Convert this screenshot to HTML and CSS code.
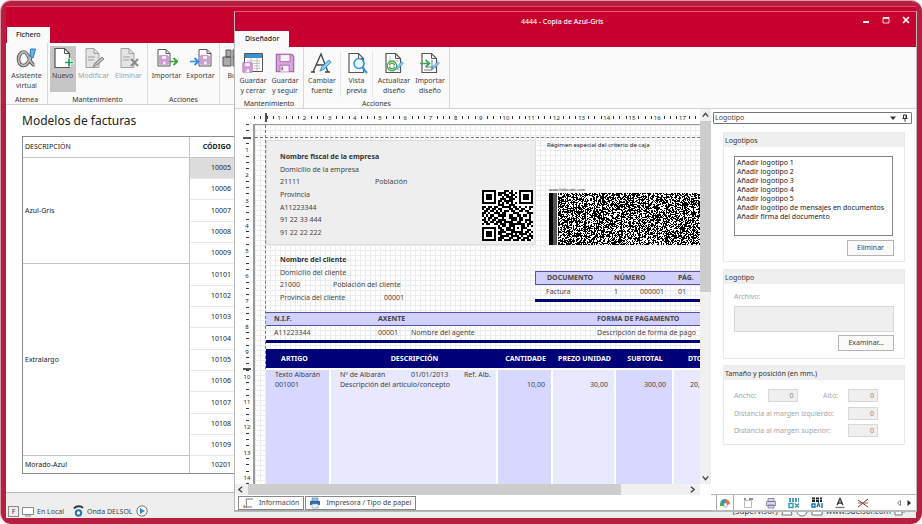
FILE: index.html
```html
<!DOCTYPE html>
<html lang="es">
<head>
<meta charset="utf-8">
<title>4444 - Copia de Azul-Gris</title>
<link rel="stylesheet" href="styles.css">
</head>
<body>
<svg class="defs" aria-hidden="true">
  <symbol id="i-page" viewBox="0 0 22 22"><path d="M3 1.5h9.500l5 5v14h-14.500z" fill="#fff" stroke="#555" stroke-width="1.200"/><path d="M12.500 1.500v5h5" fill="none" stroke="#555"/></symbol>
  <symbol id="i-floppy" viewBox="0 0 22 22"><path d="M1.500 1.500h17l2 2v17h-19z" fill="#d9a3dc" stroke="#a56bab" stroke-width="1.400"/><path d="M5.500 1.500h11v8h-11z" fill="#f8f2f8" stroke="#a56bab"/><path d="M5.500 20.500v-7h10v7" fill="#f8f2f8" stroke="#a56bab"/><path d="M8 15v4" stroke="#a56bab" stroke-width="2"/></symbol>
  <symbol id="i-pen" viewBox="0 0 14 14"><path d="M1 13l2-4.500 7.500-7.500 2.500 2.500-7.500 7.500z" fill="#8ccbf0" stroke="#2b8acb"/></symbol>
</svg>
<div class="frame">
  <main class="app">
    <header class="titlebar"><button class="tab" type="button">Fichero</button></header>
    <nav class="ribbon" aria-label="Fichero">
      <section class="group group-atenea">
        <div class="tools">
          <button class="tool" type="button"><svg viewBox="0 0 22 22"><path d="M17 2.500c-1 6-4.500 16-9.500 16-3 0-5-3-5-6.500s2.200-7 5.500-7c5 0 5.500 13 10.500 13" fill="none" stroke="#555" stroke-width="3.600"/><path d="M16.500 4c-1 5-4.500 14.500-9 14.500-3 0-5-3-5-6.500s2.200-7 5.500-7c5 0 5.500 13 10.500 13" fill="none" stroke="#bdbdbd" stroke-width="1.800"/><path d="M14.500 2h5l-2.500 9-3-2z" fill="#64b5ec" stroke="#2b7fc0"/></svg>Asistente<br>virtual</button>
        </div>
        <h2>Atenea</h2>
      </section>
      <section class="group group-mant">
        <div class="tools">
          <button class="tool active" type="button"><svg viewBox="0 0 22 22"><use href="#i-page"/><path d="M17 11v9M12.500 15.500h9" stroke="#fff" stroke-width="3.600"/><path d="M17 11.500v8M13 15.500h8" stroke="#13a35b" stroke-width="1.700"/></svg>Nuevo</button>
          <button class="tool wide off" type="button"><svg viewBox="0 0 22 22"><path d="M3 1.500h8l5 5v14h-13z" fill="#e4e4e4" stroke="#a0a0a0"/><path d="M11 1.500v5h5M5 10h7M5 13h6" fill="none" stroke="#a0a0a0"/><path d="M10 20l2-4 7-6 2 2-7 6z" fill="#bbb" stroke="#888"/></svg>Modificar</button>
          <button class="tool wide off" type="button"><svg viewBox="0 0 22 22"><path d="M3 1.500h8l5 5v14h-13z" fill="#e4e4e4" stroke="#a0a0a0"/><path d="M11 1.500v5h5M5 10h7M5 13h6" fill="none" stroke="#a0a0a0"/><path d="M13 12l7 7M20 12l-7 7" stroke="#888" stroke-width="2"/></svg>Eliminar</button>
        </div>
        <h2>Mantenimiento</h2>
      </section>
      <section class="group group-acc">
        <div class="tools">
          <button class="tool wide" type="button"><svg viewBox="0 0 22 22"><path d="M2 2.500h8l4 4v12.500h-12z" fill="#fff" stroke="#555"/><path d="M10 2.500v4h4" fill="none" stroke="#555"/><use href="#i-floppy" x="3" y="8" width="10" height="10"/><path d="M13 14.500h8M17.500 11l4 3.500-4 3.500" fill="none" stroke="#3fa33c" stroke-width="1.700"/></svg>Importar</button>
          <button class="tool wide" type="button"><svg viewBox="0 0 22 22"><path d="M9 2.500h8l4 4v12.500h-12z" fill="#fff" stroke="#555"/><path d="M17 2.500v4h4" fill="none" stroke="#555"/><use href="#i-floppy" x="10" y="8" width="10" height="10"/><path d="M0 14.500h8M4.500 11l4 3.500-4 3.500" fill="none" stroke="#2492d6" stroke-width="1.700"/></svg>Exportar</button>
        </div>
        <h2>Acciones</h2>
      </section>
      <section class="group group-find">
        <div class="tools">
          <button class="tool" type="button"><svg viewBox="0 0 22 22"><path d="M5 3h5v7h-5zM12 3h5v7h-5zM2 10h8v9h-8zM12 10h8v9h-8z" fill="#aaa" stroke="#555"/></svg>Bu</button>
        </div>
      </section>
    </nav>
    <section class="models">
      <h1>Modelos de facturas</h1>
      <table class="list">
        <thead><tr><th class="desc">DESCRIPCIÓN</th><th class="code">CÓDIGO</th><th></th></tr></thead>
        <tbody>
          <tr><td class="desc" rowspan="5">Azul-Gris</td><td class="code selected">10005</td><td></td></tr>
          <tr><td class="code">10006</td><td></td></tr>
          <tr><td class="code">10007</td><td></td></tr>
          <tr><td class="code">10008</td><td></td></tr>
          <tr><td class="code">10009</td><td></td></tr>
          <tr><td class="desc" rowspan="9">Extralargo</td><td class="code">10101</td><td></td></tr>
          <tr><td class="code">10102</td><td></td></tr>
          <tr><td class="code">10103</td><td></td></tr>
          <tr><td class="code">10104</td><td></td></tr>
          <tr><td class="code">10105</td><td></td></tr>
          <tr><td class="code">10106</td><td></td></tr>
          <tr><td class="code">10107</td><td></td></tr>
          <tr><td class="code">10108</td><td></td></tr>
          <tr><td class="code">10109</td><td></td></tr>
          <tr class="last"><td class="desc">Morado-Azul</td><td class="code">10201</td><td></td></tr>
        </tbody>
      </table>
    </section>
    <footer class="status">
      <span class="key">F</span>
      <svg class="monitor" viewBox="0 0 12 11"><path d="M.5 1.500h11v7h-11z" fill="#fff" stroke="#888"/><path d="M3 10h6" stroke="#888"/></svg>
      <span>En Local</span>
      <svg class="phone" viewBox="0 0 11 12"><path d="M1 3.500c2-3 7-3 9-.5" fill="none" stroke="#333" stroke-width="2"/><circle cx="5.500" cy="8" r="2.700" fill="#fff" stroke="#1d78b8" stroke-width="2"/></svg>
      <span>Onda DELSOL</span>
      <svg class="play" viewBox="0 0 12 12"><circle cx="6" cy="6" r="5.200" fill="#fff" stroke="#555" stroke-width=".8"/><path d="M4 3l5 3-5 3z" fill="#2d87cf"/></svg>
      <span class="right"><span>[Supervisor]</span>
      <svg class="monitor" viewBox="0 0 12 11"><path d="M1 10l2-8h6l2 8z" fill="#fff" stroke="#777"/></svg>
      <svg class="play" viewBox="0 0 12 12"><circle cx="6" cy="6" r="5" fill="#fff" stroke="#777"/></svg>
      <svg class="monitor" viewBox="0 0 12 11"><path d="M1 1h10v9h-10z" fill="#fff" stroke="#777"/></svg>
      <a href="#web">www.sdelsol.com</a>
      <svg class="monitor" viewBox="0 0 12 11"><path d="M1 4h7v6h-7zM4 4v-3h7v6h-3" fill="#fff" stroke="#777"/></svg></span>
    </footer>
  </main>

  <section class="designer" aria-label="4444 - Copia de Azul-Gris">
    <header class="titlebar">
      <button class="tab" type="button">Diseñador</button>
      <strong class="title">4444 - Copia de Azul-Gris</strong>
      <div class="controls">
        <button type="button" aria-label="Minimizar"><svg viewBox="0 0 8 8"><path d="M1 6h6" stroke="#fff" stroke-width="2"/></svg></button>
        <button type="button" aria-label="Maximizar"><svg viewBox="0 0 8 8"><path d="M1 1.500h6v5.500h-6z" fill="none" stroke="#fff" stroke-width=".8"/><path d="M1 2h6" stroke="#fff" stroke-width="1.600"/></svg></button>
        <button type="button" aria-label="Cerrar"><svg viewBox="0 0 8 8"><path d="M1 1l6 6M7 1l-6 6" stroke="#fff" stroke-width="1.700"/></svg></button>
      </div>
    </header>
    <nav class="ribbon" aria-label="Diseñador">
      <section class="group group-save">
        <div class="tools">
          <button class="tool" type="button"><svg viewBox="0 0 22 22"><path d="M2.500 1.500h18v18h-18z" fill="#fff" stroke="#555"/><path d="M3 2h17v4h-17z" fill="#3c92d0"/><path d="M5 9h13M5 11.500h13M12 14h6M12 16.500h6M9 6v13M15 6v13" stroke="#aaa" stroke-width=".7"/><use href="#i-floppy" x="0" y="10" width="11" height="11"/></svg>Guardar<br>y cerrar</button>
          <button class="tool" type="button"><svg viewBox="0 0 22 22"><use href="#i-floppy" x="1" y="1" width="20" height="20"/></svg>Guardar<br>y seguir</button>
        </div>
        <h2>Mantenimiento</h2>
      </section>
      <section class="group group-edit">
        <div class="tools">
          <button class="tool cambiar" type="button"><svg viewBox="0 0 22 22"><path d="M2 20l8-18 7 18M5.500 13h8.500M0 20h4M14 20h5" fill="none" stroke="#444" stroke-width="1.300"/><use href="#i-pen" x="8" y="7" width="13" height="13"/></svg>Cambiar<br>fuente</button>
          <button class="tool vista" type="button"><svg viewBox="0 0 22 22"><use href="#i-page"/><circle cx="13" cy="11.500" r="5" fill="#e8f5fd" stroke="#3597d6" stroke-width="1.500"/><path d="M16.500 15.500l4.500 5.500" stroke="#3597d6" stroke-width="2"/></svg>Vista<br>previa</button>
          <button class="tool actualizar" type="button"><svg viewBox="0 0 22 22"><use href="#i-page"/><path d="M7 4v14M5 9h11M5 17h11M11 8v12" stroke="#999" stroke-width=".6"/><circle cx="9" cy="14" r="4.800" fill="none" stroke="#43a846" stroke-width="1.300"/><path d="M6 13c2-3 4-2 6 0M12 15c-2 3-4 2-6 0" fill="none" stroke="#43a846" stroke-width="1.100"/><use href="#i-pen" x="12" y="9" width="9" height="9"/></svg>Actualizar<br>diseño</button>
          <button class="tool importar" type="button"><svg viewBox="0 0 22 22"><use href="#i-page"/><path d="M13 8v10M7 15h10M5 18h8" stroke="#555" stroke-width=".8"/><path d="M1 11.500h9M6.500 8l4 3.500-4 3.500" fill="none" stroke="#3ba552" stroke-width="1.700"/><use href="#i-pen" x="12" y="9" width="9" height="9"/></svg>Importar<br>diseño</button>
        </div>
        <h2>Acciones</h2>
      </section>
    </nav>
    <div class="work">
      <div class="canvas">
        <svg class="ruler-h" id="ruler-h" aria-hidden="true"></svg>
        <svg class="ruler-v" id="ruler-v" aria-hidden="true"></svg>
        <div class="page">
          <div class="top">
            <address class="company">
              <b>Nombre fiscal de la empresa</b>
              <span>Domicilio de la empresa</span>
              <span class="cols"><span>21111</span><span>Población</span></span>
              <span>Provincia</span>
              <span>A11223344</span>
              <span>91 22 33 444</span>
              <span>91 22 22 222</span>
              <svg class="qr" id="qr" viewBox="0 0 25 25" role="img" aria-label="QR"></svg>
            </address>
            <div class="regime">
              <p>Régimen especial del criterio de caja</p>
              <div class="barcode-box"><small>www.hitbcode.com</small>
              <svg class="barcode" id="barcode" aria-hidden="true"></svg></div>
            </div>
          </div>
          <div class="second">
            <address class="client">
              <b>Nombre del cliente</b>
              <span>Domicilio del cliente</span>
              <span class="cols c1"><span>21000</span><span>Población del cliente</span></span>
              <span class="cols c2"><span>Provincia del cliente</span><span>00001</span></span>
            </address>
            <table class="band doc">
              <colgroup><col class="d1"><col class="d2"><col class="d3"><col class="d4"></colgroup>
              <thead><tr><th>DOCUMENTO</th><th colspan="2">NÚMERO</th><th>PÁG.</th></tr></thead>
              <tbody><tr><td>Factura</td><td>1</td><td>000001</td><td>01</td></tr></tbody>
            </table>
          </div>
          <table class="band nif">
            <colgroup><col class="n1"><col class="n2"><col class="n3"><col class="n4"></colgroup>
            <thead><tr><th>N.I.F.</th><th colspan="2">AXENTE</th><th>FORMA DE PAGAMENTO</th></tr></thead>
            <tbody><tr><td>A11223344</td><td>00001</td><td>Nombre del agente</td><td>Descripción de forma de pago</td></tr></tbody>
          </table>
          <table class="items">
            <colgroup><col class="w1"><col class="w2"><col class="w3"><col class="w4"><col class="w5"><col class="w6"></colgroup>
            <thead><tr><th>ARTIGO</th><th>DESCRIPCIÓN</th><th>CANTIDADE</th><th>PREZO UNIDAD</th><th>SUBTOTAL</th><th>DTO.</th></tr></thead>
            <tbody><tr>
              <td>Texto Albarán<br>001001</td>
              <td><span class="note"><span>Nº de Albarán</span><span>01/01/2013</span><span>Ref. Alb.</span></span>Descripción del artículo/concepto</td>
              <td class="n"><br>10,00</td><td class="n"><br>30,00</td><td class="n"><br>300,00</td><td class="n"><br>20,00</td>
            </tr></tbody>
          </table>
        </div>
        <div class="scroll-v"><svg viewBox="0 0 10 10"><path d="M2.500 6.500l2.500-3 2.500 3" fill="none" stroke="#444" stroke-width="1.300"/></svg><div class="thumb"></div><div class="track"></div><svg viewBox="0 0 10 10"><path d="M2.500 3.500l2.500 3 2.500-3" fill="none" stroke="#444" stroke-width="1.300"/></svg></div>
        <div class="scroll-h"><svg viewBox="0 0 10 10"><path d="M6.500 2.500l-3 2.500 3 2.500" fill="none" stroke="#444" stroke-width="1.300"/></svg><div class="thumb"></div><div class="track"></div><svg viewBox="0 0 10 10"><path d="M3.500 2.500l3 2.500-3 2.500" fill="none" stroke="#444" stroke-width="1.300"/></svg></div>
        <div class="sheets">
          <button type="button"><svg viewBox="0 0 12 12"><path d="M4 2h7M4.500 2c-1 2 1 5-.5 8h6M5 10c-2 1-4-1-2-2" fill="none" stroke="#777"/><path d="M1 9l2 2" stroke="#e5a33c" stroke-width="1.600"/></svg>Información</button>
          <button type="button"><svg viewBox="0 0 12 12"><path d="M3 1h6v3h-6z" fill="#9cc3ee" stroke="#4d79b5" stroke-width=".6"/><path d="M1 4h10v4h-10z" fill="#3768ad"/><path d="M3 7h6v4h-6z" fill="#eef5ff" stroke="#6b8dbd" stroke-width=".6"/></svg>Impresora / Tipo de papel</button>
        </div>
      </div>
      <aside class="props">
        <div class="picker"><label for="el">Logotipo</label><button id="el" type="button" aria-label="Lista"><svg viewBox="0 0 8 8"><path d="M1 2.500h6l-3 3.500z" fill="#333"/></svg></button><button type="button" aria-label="Fijar"><svg viewBox="0 0 8 8"><path d="M2.500 1h3v3.500h-3zM1.500 4.500h5M4 4.500v3" fill="none" stroke="#333"/><path d="M5 1v3.500" stroke="#333"/></svg></button></div>
        <fieldset class="box logos">
          <legend>Logotipos</legend>
          <select size="7" aria-label="Logotipos">
            <option>Añadir logotipo 1</option><option>Añadir logotipo 2</option><option>Añadir logotipo 3</option><option>Añadir logotipo 4</option><option>Añadir logotipo 5</option><option>Añadir logotipo de mensajes en documentos</option><option>Añadir firma del documento</option>
          </select>
          <button class="btn" type="button">Eliminar</button>
        </fieldset>
        <fieldset class="box file">
          <legend>Logotipo</legend>
          <label for="archivo">Archivo:</label>
          <textarea id="archivo" disabled></textarea>
          <button class="btn" type="button">Examinar...</button>
        </fieldset>
        <fieldset class="box size">
          <legend>Tamaño y posición (en mm.)</legend>
          <div class="row"><label for="ancho">Ancho:</label><input id="ancho" value="0" disabled><label class="push" for="alto">Alto:</label><input id="alto" value="0" disabled></div>
          <div class="row"><label for="izq">Distancia al margen izquierdo:</label><input id="izq" value="0" disabled></div>
          <div class="row"><label for="sup">Distancia al margen superior:</label><input id="sup" value="0" disabled></div>
        </fieldset>
        <div class="toolsheets">
          <button class="on" type="button" aria-label="Colores"><svg viewBox="0 0 12 12"><path d="M6 2a5 5 0 0 0-5 5v2h4z" fill="#4caf50"/><path d="M6 2a5 5 0 0 1 5 5l-5 2z" fill="#e8743b"/><path d="M2 4l4-2 1 4-3 1z" fill="#3d8bd4"/><path d="M5 6h3v4h-3z" fill="#fff" stroke="#777" stroke-width=".5"/></svg></button>
          <button type="button" aria-label="Texto"><svg viewBox="0 0 12 12"><path d="M2.500 3.500h7v7h-7z" fill="#fff" stroke="#bbb"/><path d="M7 2h4M2 2h2" stroke="#668" stroke-width="1.300"/></svg></button>
          <button type="button" aria-label="Impresora"><svg viewBox="0 0 12 12"><path d="M3 1.500h6v3h-6zM1.500 4.500h9v4h-9zM3 8h6v3h-6z" fill="#dcd9f3" stroke="#77719c" stroke-width=".8"/></svg></button>
          <button type="button" aria-label="Código"><svg viewBox="0 0 12 12"><path d="M1 2h10M1 4h10" stroke="#2377bd" stroke-width="1.400" stroke-dasharray="2 1"/><path d="M1 6.500h4v4h-4zM7 6.500l4 4M11 6.500l-4 4" fill="none" stroke="#2c9bb0" stroke-width="1.400"/></svg></button>
          <button type="button" aria-label="Código QR"><svg viewBox="0 0 12 12"><path d="M1 1.500h10M1 4h10" stroke="#222" stroke-width="2" stroke-dasharray="3 1"/><path d="M1 7h3v3h-3zM6 10l1.500-4 1.500 4M11 6v5" fill="none" stroke="#1673b5" stroke-width="1.400"/></svg></button>
          <button type="button" aria-label="Fuente"><svg viewBox="0 0 12 12"><path d="M3 8l3-6.500 3 6.500M4 6h4" fill="none" stroke="#333" stroke-width="1.300"/><path d="M1.500 10.500h9" stroke="#777" stroke-width="1.400"/></svg></button>
          <button type="button" aria-label="Líneas"><svg viewBox="0 0 12 12"><path d="M1 3l10 7M11 2l-10 8" stroke="#333" stroke-width=".9"/><path d="M1 6h10" stroke="#d2453c"/></svg></button>
          <span class="arrows"><button type="button" aria-label="Anterior"><svg viewBox="0 0 8 8"><path d="M5.500 1.500v5l-3-2.500z" fill="none" stroke="#666" stroke-width=".8"/></svg></button><button type="button" aria-label="Siguiente"><svg viewBox="0 0 8 8"><path d="M2.500 1v6l3.500-3z" fill="#222"/></svg></button></span>
        </div>
      </aside>
    </div>
  </section>
</div>
<script src="script.js"></script>
</body>
</html>
```
FILE: styles.css
```css
* { box-sizing: border-box; }
html, body { height: 100%; margin: 0; }
body { font: 7px/10px "Noto Sans", "Open Sans", sans-serif; color: #444; background: #fff; overflow: hidden; }
button, input, select, textarea { font: inherit; color: inherit; margin: 0; padding: 0; border: 0; background: none; border-radius: 0; }
h1, h2, p { margin: 0; font-weight: 400; }
address { font-style: normal; }
svg { display: block; flex: none; }
.defs { position: absolute; width: 0; height: 0; }

.frame { position: relative; height: 100vh; padding: 6px; background: #b71f40; border: 1px solid #d99aa8; border-width: 1px 0 0 1px; border-radius: 11px; display: flex; }
.app { flex: 1; min-width: 0; display: flex; flex-direction: column; background: #fff; border-top: 1px solid #d2506b; margin: -1px 0 0 -1px; overflow: hidden; }

.titlebar { display: flex; align-items: flex-end; height: 36px; flex: none; background: #c8002d; padding-left: 1px; }
.tab { height: 16px; padding: 0 9px; background: #fafafa; color: #222; font-weight: 500; }
.ribbon { display: flex; height: 62px; flex: none; background: #fafafa; border-bottom: 1px solid #d4d4d4; }
.group { display: flex; flex-direction: column; justify-content: space-between; padding-top: 3px; border-right: 1px solid #d8d8d8; flex: none; }
.group h2 { font-size: 7px; line-height: 9px; text-align: center; color: #333; }
.tools { display: flex; justify-content: center; }
.tool { display: flex; flex-direction: column; align-items: center; width: 33px; height: 46px; flex: none; line-height: 10px; white-space: nowrap; text-align: center; }
.tool svg { width: 22px; height: 22px; margin: 1px 0 2px; }
.tool.active { width: 26px; background: #c6c6c6; }
.tool.wide { width: 34px; }
.tool.off { color: #a3a3a3; }
.group-atenea { width: 42px; }
.group-mant { width: 100px; }
.group-mant .tools { gap: 1px; }
.group-acc { width: 72px; }
.group-find { width: 24px; border: 0; }

.models { flex: 1; min-height: 0; padding: 7px 16px 0; overflow: hidden; }
h1 { font-size: 12px; line-height: 18px; color: #222; margin-bottom: 6px; }
.list { width: 100%; table-layout: fixed; border-collapse: separate; border-spacing: 0; border: 1px solid #8a8a8a; color: #222; }
.list th, .list td { height: 21px; padding: 0 4px 0 2px; text-align: left; font-weight: 400; border-bottom: 1px solid #e8e8e8; }
.list thead th { border-bottom-color: #c4c4c4; }
.list .desc { width: 167px; border-right: 1px solid #c4c4c4; border-bottom-color: #c4c4c4; }
.list .code { width: 45px; text-align: right; }
.list th.code { font-weight: 700; }
.list .selected { background: #dcdcdc; }
.list tr:nth-child(3n) td.code { height: 22px; }
.list tbody tr.last td, .list tbody tr.last td.code { height: 17px; border-bottom: 0; }

.status { display: flex; align-items: flex-end; gap: 3px; height: 26px; flex: none; padding: 0 2px 1px; background: #eee; border-top: 1px solid #b9b9b9; line-height: 11px; }
.key { width: 11px; text-align: center; border: 1px solid #888; line-height: 9px; }
.monitor { width: 12px; height: 11px; }
.phone { width: 11px; height: 12px; margin-left: 6px; }
.play { width: 12px; height: 12px; }
.right { display: flex; gap: 3px; margin-left: auto; padding-right: 8px; font-size: 8px; }
.right a { color: inherit; text-decoration: none; }

.designer { position: absolute; inset: 10px 5px 12px 233px; display: flex; flex-direction: column; background: #fff; border: 1px solid #b9b9b9; border-top-color: #de5f7b; }
.designer .titlebar { height: 35px; padding-left: 0; }
.designer .tab { padding: 0 10px; }
.title { flex: 1; align-self: flex-start; padding: 5px 27px 0 0; text-align: center; color: #fff; font-weight: 500; }
.controls { display: flex; gap: 12px; align-self: flex-start; padding: 4px 6px 0 0; }
.controls svg { width: 8px; height: 8px; }
.designer .group { padding-top: 4px; }
.group-save { width: 69px; }
.group-save .tool { width: 32px; }
.group-edit { width: 146px; }
.group-edit .tools { justify-content: flex-start; }
.tool.cambiar { width: 36px; }
.tool.vista { width: 32px; border-left: 1px solid #e6e6e6; }
.tool.actualizar { width: 43px; border-left: 1px solid #e6e6e6; }
.tool.importar { width: 30px; }

.work { flex: 1; min-height: 0; display: grid; grid-template-columns: minmax(0, 1fr) 205px; }
.canvas { display: grid; grid-template-columns: 18px minmax(0, 1fr) 11px; grid-template-rows: 15px minmax(0, 1fr) 11px 16px; min-height: 0; }
.ruler-h { grid-column: 1 / 3; width: 100%; height: 15px; }
.ruler-v { grid-row: 2; grid-column: 1; width: 18px; height: 100%; }
.ruler-h text, .ruler-v text { font-size: 6px; fill: #222; text-anchor: middle; }
.page { grid-row: 2; grid-column: 2; position: relative; overflow: hidden; min-height: 0; padding: 15px 0 0 11px; border: solid #999; border-width: 1px 0 0 2px; color: #444;
  background: repeating-linear-gradient(90deg, #ececec 0 1px, transparent 1px 5px), repeating-linear-gradient(#ececec 0 1px, #fff 1px 5px); }
.page::before { content: ""; position: absolute; left: 0; right: 0; top: 12px; border-top: 1px dashed #777; }
.page::after { content: ""; position: absolute; left: 10px; top: 0; height: 244px; border-left: 1px dashed #777; }
.top { display: grid; grid-template-columns: 270px minmax(0, 1fr); height: 105px; }
.company { position: relative; display: flex; flex-direction: column; justify-content: space-between; padding: 11px 13px 6px; background: #eee; border: 1px solid #ddd; }
.company b, .client b { color: #333; }
.cols { display: flex; }
.company .cols span:first-child { width: 95px; }
.qr { position: absolute; right: 2px; bottom: 3px; width: 51px; height: 51px; background: #fff; }
.regime { display: flex; flex-direction: column; justify-content: space-between; padding-left: 11px; min-width: 0; font-size: 6px; color: #222; }
.barcode-box { padding-left: 2px; }
.barcode-box small { display: block; font-size: 4px; line-height: 6px; }
.barcode { width: 100%; height: 52px; }
.second { display: flex; height: 67px; }
.client { display: flex; flex-direction: column; justify-content: space-between; flex: none; width: 269px; height: 67px; padding: 10px 14px 9px; }
.c1 span:first-child { width: 53px; }
.c2 span:first-child { width: 104px; }
.band { border-collapse: separate; border-spacing: 0; table-layout: fixed; border-bottom: 3px solid #000078; }
.band th { height: 14px; padding: 0; text-align: left; background: #d2d0fd; border: solid #5552a8; border-width: 1px 0; }
.band td { height: 14px; padding: 0; white-space: nowrap; }
.doc { flex: none; width: 200px; margin-top: 26px; align-self: flex-start; }
.doc tr > :first-child { padding-left: 11px; }
.doc th:first-child { border-left-width: 1px; }
.d1 { width: 79px; } .d2 { width: 26px; } .d3 { width: 38px; } .d4 { width: 57px; }
.nif { width: 480px; }
.nif tr > :first-child { padding-left: 8px; }
.n1 { width: 112px; } .n2 { width: 33px; } .n3 { width: 186px; } .n4 { width: 149px; }

.items { width: 470px; margin-top: 6px; table-layout: fixed; border-collapse: separate; border-spacing: 0; }
.w1 { width: 65px; } .w2 { width: 167px; } .w3 { width: 55px; } .w4 { width: 63px; } .w5 { width: 58px; } .w6 { width: 62px; }
.items th { height: 19px; padding: 0; background: #000078; color: #fff; }
.items th:first-child { padding-right: 8px; }
.items th:last-child { padding-right: 18px; }
.items td { height: 130px; padding: 0 9px; vertical-align: top; background: #e8e8ff; border-right: 2px solid #fff; border-top: 2px solid #fff; }
.items td:nth-child(odd) { background: #d8d8ff; }
.items td.n { text-align: right; padding: 0 6px; }
.items td:last-child.n { padding-right: 26px; }
.note { display: flex; }
.note span:nth-child(1) { width: 71px; }
.note span:nth-child(2) { width: 53px; }
.note span { white-space: nowrap; flex: none; }

.scroll-v { grid-column: 3; grid-row: 1 / 3; display: flex; flex-direction: column; background: #f0f0f0; }
.scroll-v svg, .scroll-h svg { width: 11px; height: 12px; }
.scroll-v .thumb { flex: 171; background: #cdcdcd; }
.scroll-v .track { flex: 179; }
.scroll-h { grid-row: 3; grid-column: 1 / 3; display: flex; background: #f0f0f0; }
.scroll-h svg { height: 11px; margin-right: 2px; }
.scroll-h .thumb { flex: 373; background: #cdcdcd; }
.scroll-h .track { flex: 66; }
.sheets { grid-row: 4; grid-column: 1 / 4; display: flex; gap: 1px; padding: 1px 3px 0; border-bottom: 1px solid #aaa; }
.sheets button { display: flex; align-items: center; gap: 5px; padding: 0 4px 0 3px; border: 1px solid #888; }
.sheets svg { width: 12px; height: 12px; }

.props { display: flex; flex-direction: column; min-height: 0; padding-top: 3px; background: #fff; }
.picker { display: flex; align-items: center; height: 12px; margin: 0 4px 0 2px; padding: 0 2px 0 1px; border: 1px solid #777; border-radius: 1px; }
.picker label { flex: 1; }
.picker svg { width: 8px; height: 8px; margin-left: 4px; }
.box { min-width: 0; margin: 7px 11px 0 12px; padding: 0 10px; border: 1px solid #eaeaea; display: flex; flex-direction: column; align-items: flex-start; }
.box legend { float: left; width: calc(100% + 20px); margin: 0 -10px; height: 14px; padding: 0 1px; line-height: 16px; background: #efefef; color: #333; }
.logos { margin-top: 8px; height: 130px; }
.logos select { width: 159px; height: 80px; margin: 9px 0 4px; padding: 1px 0; border: 1px solid #888; color: #222; overflow: hidden; }
.logos option { height: 9px; min-height: 9px; padding: 0 2px; line-height: 9px; }
.btn { height: 16px; padding: 0 9px; border: 1px solid #b5b5b5; background: #fafafa; align-self: flex-end; }
.file { height: 90px; }
.box label { color: #a5a5a5; }
.file label { margin-top: 8px; }
.file textarea { width: 100%; height: 26px; margin: 4px 0 3px; background: #efefef; border: 1px solid #d8d8d8; resize: none; }
.size { height: 80px; margin-top: 6px; }
.row { display: flex; align-items: center; width: 144px; height: 13px; margin-top: 4px; }
.row:first-of-type { margin-top: 9px; margin-bottom: 1px; }
.row input { width: 30px; height: 13px; margin-left: auto; padding: 0 3px 1px; text-align: right; background: #efefef; border: 1px solid #d8d8d8; color: #888; }
.row #ancho { margin-left: 11px; }
.row .push { margin-left: auto; }
.row .push + input { margin-left: 10px; }
.toolsheets { display: flex; margin-top: auto; height: 17px; padding-left: 5px; border: 1px solid #bbb; border-width: 1px 0; background: #fff; }
.toolsheets button { width: 23px; display: flex; justify-content: center; align-items: center; }
.toolsheets .on { width: 18px; border: 1px solid #aaa; border-width: 0 1px; margin-right: 2px; }
.toolsheets svg { width: 12px; height: 12px; }
.arrows { display: flex; margin-left: auto; padding-right: 2px; }
.arrows button { width: 10px; }
.arrows svg { width: 8px; height: 8px; }
```
FILE: script.js
```js
const CM = 25.2;
const NS = "http://www.w3.org/2000/svg";

function add(parent, tag, attrs, text) {
  const el = document.createElementNS(NS, tag);
  for (const k in attrs) el.setAttribute(k, attrs[k]);
  if (text !== undefined) el.textContent = text;
  parent.appendChild(el);
}

function noise(seed) {
  let s = seed;
  return () => (s = (s * 16807) % 2147483647) / 2147483647;
}

const rh = document.getElementById("ruler-h");
const rv = document.getElementById("ruler-v");
for (let q = 0; q < 71; q++) {
  const x = 19 + q * CM / 4;
  const y = q * CM / 4;
  if (q % 4 === 0 && q > 0) {
    add(rh, "text", { x: x, y: 11 }, q / 4);
    if (q < 57) add(rv, "text", { x: 12, y: y + 3 }, q / 4);
  } else {
    add(rh, "rect", { x: Math.round(x), y: 7, width: 1, height: 3, fill: "#333" });
    add(rv, "rect", { x: 11, y: Math.round(y), width: 3, height: 1, fill: "#333" });
  }
}
add(rh, "rect", { x: 30, y: 4, width: 2, height: 9, fill: "#555" });
add(rv, "rect", { x: 8, y: 13, width: 8, height: 2, fill: "#555" });
add(rv, "rect", { x: 8, y: 244, width: 8, height: 2, fill: "#555" });

const QR = [
  "1111111000011010001111111",
  "1000001011110110101000001",
  "1011101011011011001011101",
  "1011101000101110101011101",
  "1011101001110111001011101",
  "1000001011011110001000001",
  "1111111010101010101111111",
  "0000000011100111000000000",
  "1101101100111101101001011",
  "1011011011000110110110010",
  "0110110101011011001101100",
  "1101001110110001110000111",
  "1010110011110110011011010",
  "0101101100100111101100010",
  "1101011011110011101101110",
  "0110110111011110011001011",
  "1011001101110111111110110",
  "0000000010110111000110101",
  "1111111011001101010111000",
  "1000001001101111000100110",
  "1011101011110011111101101",
  "1011101011001110101111010",
  "1011101001111011110100111",
  "1000001011100110011011101",
  "1111111011011101110110110"
];
const dots = (rows) => rows.map((r, y) => [...r].map((c, x) => c === "1" ? `M${x} ${y}h1v1h-1z` : "").join("")).join("");
const qr = document.getElementById("qr");
add(qr, "path", { d: dots(QR), fill: "#000", "shape-rendering": "crispEdges" });

const bar = document.getElementById("barcode");
const rnd = noise(4444);
let cells = "";
for (let x = 9; x < 160; x++) {
  const density = x % 9 === 0 ? 0.85 : 0.54;
  for (let y = 0; y < 52; y++) if (rnd() < density) cells += `M${x} ${y}h1v1h-1z`;
}
add(bar, "rect", { width: "100%", height: 52, fill: "#fff" });
add(bar, "rect", { width: 4, height: 52, fill: "#000" });
add(bar, "rect", { x: 4, width: 4, height: 52, fill: "#555" });
add(bar, "path", { d: cells, fill: "#000" });
```
